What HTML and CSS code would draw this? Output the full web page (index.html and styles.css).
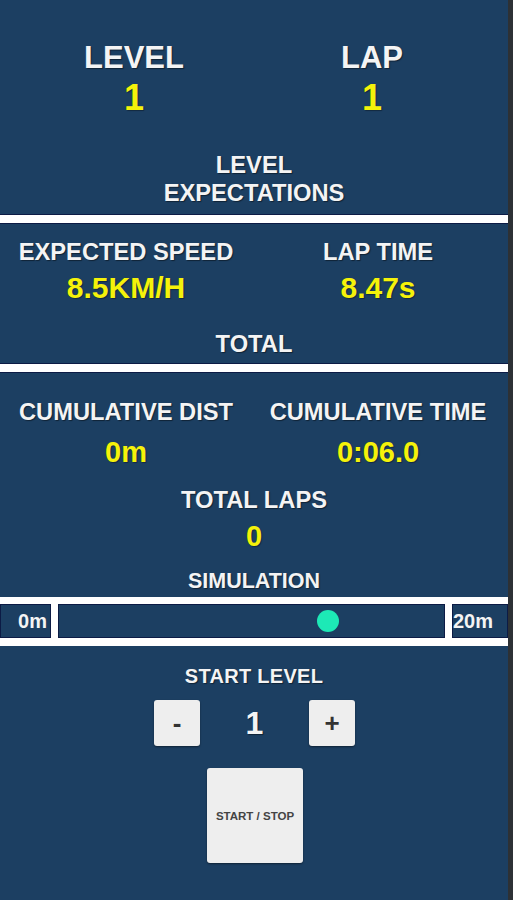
FILE: index.html
```html
<!DOCTYPE html>
<html lang="en">

<head>
    <meta charset="UTF-8">
    <meta name="viewport" content="width=device-width, initial-scale=1.0">
    <title>Beep Test</title>
    <link rel="stylesheet" href="styles.css">
</head>

<body>
    <div class="screen">
        <div class="stats top">
            <div class="stat">
                <div class="label big">LEVEL</div>
                <div class="value huge">1</div>
            </div>
            <div class="stat">
                <div class="label big">LAP</div>
                <div class="value huge">1</div>
            </div>
        </div>

        <h2 class="heading expectations">LEVEL<br>EXPECTATIONS</h2>
        <div class="divider"></div>

        <div class="stats speed">
            <div class="stat">
                <div class="label">EXPECTED SPEED</div>
                <div class="value">8.5KM/H</div>
            </div>
            <div class="stat">
                <div class="label">LAP TIME</div>
                <div class="value">8.47s</div>
            </div>
        </div>

        <h2 class="heading total">TOTAL</h2>
        <div class="divider"></div>

        <div class="stats cumulative">
            <div class="stat">
                <div class="label">CUMULATIVE DIST</div>
                <div class="value">0m</div>
            </div>
            <div class="stat">
                <div class="label">CUMULATIVE TIME</div>
                <div class="value">0:06.0</div>
            </div>
        </div>

        <div class="stat laps">
            <div class="label">TOTAL LAPS</div>
            <div class="value">0</div>
        </div>

        <h2 class="heading simulation">SIMULATION</h2>
        <div class="sim-bar">
            <div class="sim-end start">0m</div>
            <div class="sim-track">
                <span class="runner" style="left: 69.8%"></span>
            </div>
            <div class="sim-end finish">20m</div>
        </div>

        <h2 class="heading start-level">START LEVEL</h2>
        <div class="stepper">
            <button type="button" class="step-btn">-</button>
            <span class="step-value">1</span>
            <button type="button" class="step-btn">+</button>
        </div>

        <button type="button" class="start-stop">START / STOP</button>
    </div>
</body>

</html>
```

FILE: styles.css
```css
body {
    margin: 0;
    background-color: #2d3135;
    font-family: 'Liberation Sans', Arial, sans-serif;
    font-weight: bold;
}

.screen {
    width: 508px;
    min-height: 900px;
    background-color: #1c3f62;
    color: #f4f4f4;
    padding-top: 38px;
    box-sizing: border-box;
}

.label,
.heading {
    color: #f4f4f4;
    text-shadow: 1px 1px 1px rgba(0, 0, 0, 0.45);
}

.value {
    color: #f5f20a;
    text-shadow: 1px 1px 1px rgba(0, 0, 0, 0.35);
}

/* two column rows */
.stats {
    display: grid;
    grid-template-columns: 1fr 1fr;
    padding-right: 4px;
    text-align: center;
}

.stats.top {
    padding: 0 17px 0 15px;
}

.label {
    font-size: 23.7px;
    line-height: 36px;
}

.label.big {
    font-size: 31px;
    line-height: 40px;
}

.value {
    font-size: 30px;
    line-height: 36px;
}

.value.huge {
    font-size: 36px;
    line-height: 40px;
}

.heading {
    margin: 0;
    font-size: 23.7px;
    line-height: 28px;
    text-align: center;
}

.expectations {
    margin-top: 33px;
}

.divider {
    height: 8px;
    background-color: #ffffff;
    border-top: 1px solid #0c1b45;
    border-bottom: 1px solid #0c1b45;
}

.expectations + .divider {
    margin-top: 7px;
}

.speed {
    margin-top: 10px;
}

.total {
    margin-top: 24px;
}

.total + .divider {
    margin-top: 5px;
}

.cumulative {
    margin-top: 21px;
}

.cumulative .value {
    margin-top: 4px;
    font-size: 29px;
}

.laps {
    margin-top: 14px;
    text-align: center;
}

.laps .label {
    line-height: 32px;
}

.laps .value {
    font-size: 29px;
    line-height: 40px;
}

.simulation {
    margin-top: 11px;
    font-size: 21.5px;
}

/* simulation track */
.sim-bar {
    display: grid;
    grid-template-columns: 51px 1fr 56px;
    gap: 7px;
    margin-top: 2px;
    padding: 7px 0 8px;
    background-color: #ffffff;
}

.sim-end,
.sim-track {
    height: 34px;
    background-color: #1c3f62;
    box-shadow: inset 0 0 0 1px #0c1b45;
    font-size: 20px;
    line-height: 34px;
    color: #f4f4f4;
}

.sim-end.start {
    text-align: right;
    padding-right: 4px;
}

.sim-end.finish {
    padding-left: 1px;
}

.sim-track {
    position: relative;
}

.runner {
    position: absolute;
    top: 6px;
    width: 22px;
    height: 22px;
    margin-left: -11px;
    border-radius: 50%;
    background-color: #1de9b6;
}

.start-level {
    margin-top: 16px;
    font-size: 20px;
    letter-spacing: 0.3px;
}

/* start level stepper */
.stepper {
    display: flex;
    justify-content: center;
    align-items: center;
    margin-top: 10px;
    padding-left: 1px;
}

.step-btn,
.start-stop {
    border: none;
    border-radius: 3px;
    background-color: #eeeeee;
    color: #333;
    font-family: inherit;
    font-weight: bold;
    box-shadow: 0 1px 2px rgba(0, 0, 0, 0.45);
    cursor: pointer;
    padding: 0;
}

.step-btn {
    width: 46px;
    height: 46px;
    font-size: 26px;
}

.step-value {
    width: 109px;
    text-align: center;
    font-size: 32px;
    color: #f4f4f4;
    text-shadow: 1px 1px 1px rgba(0, 0, 0, 0.45);
}

.start-stop {
    display: block;
    width: 96px;
    height: 95px;
    margin: 22px auto 0;
    position: relative;
    left: 1px;
    font-size: 11.5px;
    color: #444;
}
```
